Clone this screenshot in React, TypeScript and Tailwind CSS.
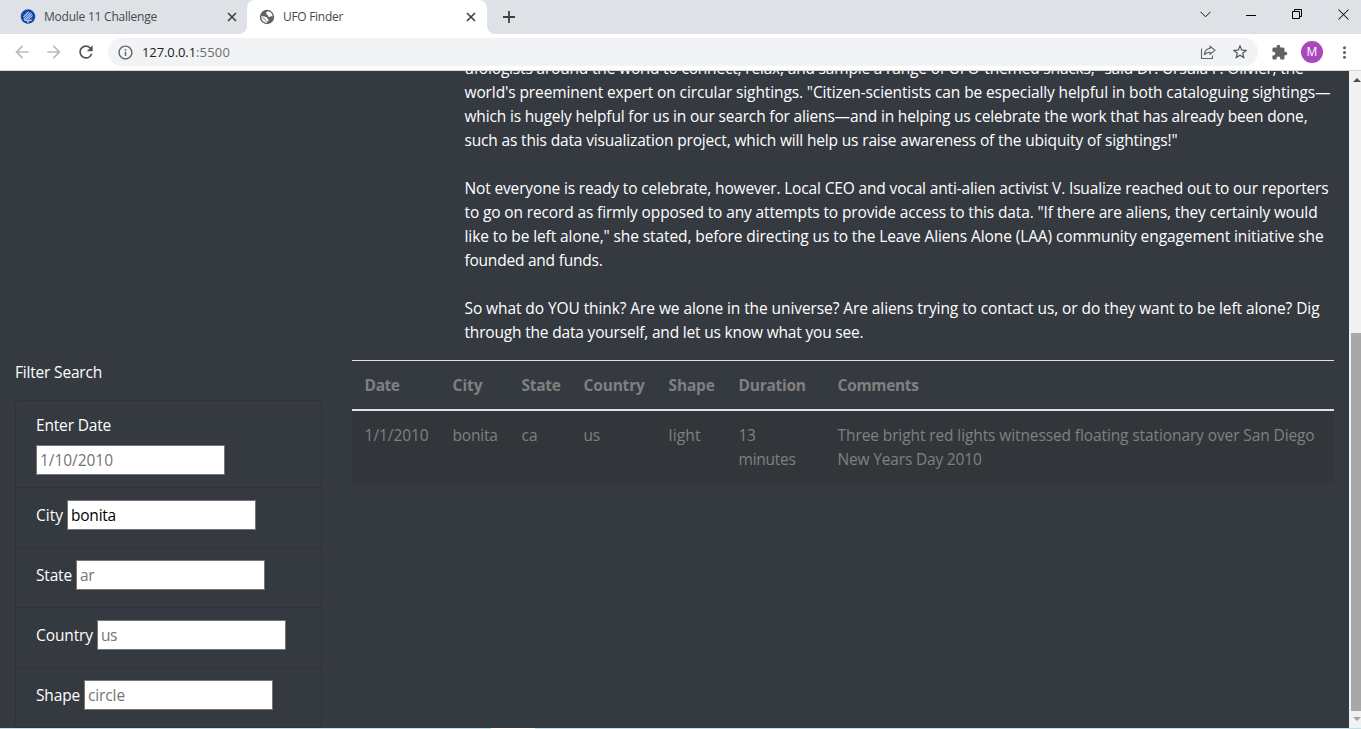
import { useLayoutEffect, useRef, useState } from "react";
import { MdRefresh, MdArrowBack, MdArrowForward, MdStarBorder, MdExtension, MdMoreVert, MdInfoOutline } from "react-icons/md";

/** Inline text tracked so that it fills a given width. */
function Fit({ text, width, className = "" }: { text: string; width: number; className?: string }) {
  const ref = useRef<HTMLSpanElement>(null);
  const [spacing, setSpacing] = useState(0);
  useLayoutEffect(() => {
    const el = ref.current;
    if (!el) return;
    el.style.letterSpacing = "0px";
    const next = (width - el.getBoundingClientRect().width) / text.length;
    el.style.letterSpacing = `${next}px`;
    setSpacing(next);
  }, [text, width]);
  return (
    <span ref={ref} className={`inline-block whitespace-pre ${className}`} style={{ letterSpacing: spacing }}>
      {text}
    </span>
  );
}

type Line = [string, number];

const paragraphs: Line[][] = [
  [
    ["ufologists around the world to connect, relax, and sample a range of UFO-themed snacks,\" said Dr. Ursula F. Olivier, the", 839],
    ["world's preeminent expert on circular sightings. \"Citizen-scientists can be especially helpful in both cataloguing sightings—", 866],
    ["which is hugely helpful for us in our search for aliens—and in helping us celebrate the work that has already been done,", 843],
    ["such as this data visualization project, which will help us raise awareness of the ubiquity of sightings!\"", 713],
  ],
  [
    ["Not everyone is ready to celebrate, however. Local CEO and vocal anti-alien activist V. Isualize reached out to our reporters", 864],
    ["to go on record as firmly opposed to any attempts to provide access to this data. \"If there are aliens, they certainly would", 853],
    ["like to be left alone,\" she stated, before directing us to the Leave Aliens Alone (LAA) community engagement initiative she", 859],
    ["founded and funds.", 138],
  ],
  [
    ["So what do YOU think? Are we alone in the universe? Are aliens trying to contact us, or do they want to be left alone? Dig", 855],
    ["through the data yourself, and let us know what you see.", 399],
  ],
];

const headers: Line[] = [["Date", 35], ["City", 30], ["State", 39], ["Country", 61], ["Shape", 46], ["Duration", 67], ["Comments", 81]];
const cells: Line[][] = [
  [["1/1/2010", 64]],
  [["bonita", 45]],
  [["ca", 16]],
  [["us", 16]],
  [["light", 32]],
  [["13", 17], ["minutes", 57]],
  [["Three bright red lights witnessed floating stationary over San Diego", 477], ["New Years Day 2010", 144]],
];
const grid = "grid grid-cols-[88px_69px_62px_85px_70px_99px_1fr] pl-[12.6px]";

const filters = [
  { label: "City", labelWidth: 27, text: "bonita", textWidth: 45, filled: true },
  { label: "State", labelWidth: 36, text: "ar", textWidth: 14, filled: false },
  { label: "Country", labelWidth: 57, text: "us", textWidth: 16, filled: false },
  { label: "Shape", labelWidth: 44, text: "circle", textWidth: 37, filled: false },
];

function Field({ text, width, filled = false }: { text: string; width: number; filled?: boolean }) {
  return (
    <div className={`flex h-[30px] w-[189px] items-center border border-[#767676] bg-white pl-[3px] leading-6 ${filled ? "text-black" : "text-[#757575]"}`}>
      <Fit text={text} width={width} />
    </div>
  );
}

function Cross() {
  return (
    <svg width="10" height="10" viewBox="0 0 10 10" stroke="#3c4043" strokeWidth="1.6">
      <path d="M1 1l8 8M9 1l-8 8" />
    </svg>
  );
}

function TabStrip() {
  return (
    <div className="flex h-[34px] shrink-0 bg-[#dee1e6] text-[12px] leading-4 text-[#45494d]">
      <div className="flex h-[34px] w-[247px] items-center pl-5">
        <svg width="16" height="16" viewBox="0 0 16 16" className="shrink-0">
          <circle cx="8" cy="7.600" r="7.300" fill="#1546ad" />
          <path d="M3.500 8l5-5M4 10.200l6.500-6.600M5.500 11l6.300-6.300M8 10.800l4.500-4.500" stroke="#b9cdf2" strokeWidth="1.100" />
          <path d="M3.800 10.800q4.200 2.400 8.400 0M8 11.500v3" stroke="#dce6fa" strokeWidth="1" fill="none" />
          <path d="M5 14.200l2 1.800M11 14.200l-2 1.800" stroke="#dee1e6" strokeWidth="1" />
        </svg>
        <Fit text="Module 11 Challenge" width={113} className="ml-2" />
        <div className="ml-[70px] flex"><Cross /></div>
      </div>
      <div className="relative flex h-[34px] w-[240px] items-center rounded-t-lg bg-white pl-3">
        <svg className="absolute bottom-0 -left-2" width="8" height="8"><path d="M8 0v8H0a8 8 0 0 0 8-8z" fill="#fff" /></svg>
        <svg className="absolute -right-2 bottom-0" width="8" height="8"><path d="M0 0v8h8a8 8 0 0 1-8-8z" fill="#fff" /></svg>
        <svg width="16" height="16" viewBox="0 0 16 16" className="shrink-0">
          <circle cx="8" cy="8" r="7.200" fill="#5f6368" />
          <path d="M9.300 2.300C7.800 2.500 7 3.400 7.200 4.600c.2 1 1 .9 1.500 1.500.5.700.2 1.500 1.200 1.800 1.100.3 1.600-.8 3.800-.6C13.500 4.800 11.800 2.900 9.300 2.300z" fill="#fff" />
          <path d="M2.200 7.500c1.700-.3 3.700-.2 5 .5 1.100.600.7 1.600 1.800 2 .9.300.8 1.200.1 1.700-.8.500-1 1-1 2.100C4.900 13.800 2.200 11.200 2.200 7.500z" fill="#fff" />
          <path d="M3 8.800l2.700.9.500 1.300 1 .7-.2 1.300" stroke="#5f6368" strokeWidth=".7" fill="none" />
        </svg>
        <Fit text="UFO Finder" width={60} className="ml-2" />
        <div className="ml-[123px] flex"><Cross /></div>
      </div>
      <div className="flex flex-1 items-center pl-4">
        <svg width="12" height="12" viewBox="0 0 12 12" stroke="#3c4043" strokeWidth="1.8"><path d="M6 0v12M0 6h12" /></svg>
      </div>
      <div className="flex h-7 items-center pr-3">
        <svg width="11" height="7" viewBox="0 0 11 7" fill="none" stroke="#111" strokeWidth="1"><path d="M.5 .8l5 5 5-5" /></svg>
        <svg className="ml-[35px]" width="11" height="11" viewBox="0 0 11 11" stroke="#000" strokeWidth="1"><path d="M0 6.500h10" /></svg>
        <svg className="ml-[35px]" width="11" height="11" viewBox="0 0 11 11" fill="none" stroke="#000" strokeWidth="1"><path d="M.5 2.500h7v7h-7zM2.500 2.500v-2h7v7h-2" /></svg>
        <svg className="ml-[35px]" width="11" height="11" viewBox="0 0 11 11" stroke="#111" strokeWidth="1.050"><path d="M.5 .5l10 10M10.500 .5l-10 10" /></svg>
      </div>
    </div>
  );
}

function Toolbar() {
  return (
    <div className="flex h-[37px] shrink-0 items-center border-b border-[#d5d7da] bg-white pl-3">
      <MdArrowBack size={20} color="#bababa" />
      <MdArrowForward size={20} color="#bababa" className="ml-3" />
      <MdRefresh size={20} color="#505357" className="ml-3" />
      <div className="ml-3 flex h-7 w-[1150px] items-center rounded-full bg-[#f1f3f4] pl-[9px]">
        <MdInfoOutline size={17} color="#5f6368" />
        <div className="ml-2 flex text-[13px] leading-5">
          <Fit text="127.0.0.1" width={54} className="text-[#202124]" />
          <Fit text=":5500" width={34} className="text-[#6a6e73]" />
        </div>
        <div className="flex-1" />
        <svg width="16" height="16" viewBox="0 0 16 16" fill="none" stroke="#5f6368" strokeWidth="1.1">
          <path d="M1.500 4.500v10h11v-3" />
          <path d="M10 2.300l5 4-5 4V8.200C7.300 8.200 5.600 9 4.300 11c.3-4 2.500-6.200 5.700-6.600z" />
        </svg>
        <MdStarBorder size={18} color="#505357" className="mr-[9px] ml-[15px]" />
      </div>
      <MdExtension size={17} color="#5f6368" className="ml-[13px]" />
      <div className="ml-[13px] flex h-[22px] w-[22px] items-center justify-center rounded-full bg-[#ab47bc] text-[12px] text-white">M</div>
      <MdMoreVert size={19} color="#5f6368" className="ml-3" />
    </div>
  );
}

function Article() {
  return (
    <div className="-mt-[15px] ml-[450px] flex flex-col gap-6 leading-6 text-white">
      {paragraphs.map((lines, i) => (
        <div key={i} className="pl-[14.500px]">
          {lines.map(([text, width]) => (
            <div key={text} className="h-6"><Fit text={text} width={width} /></div>
          ))}
        </div>
      ))}
    </div>
  );
}

function Filters() {
  return (
    <div className="w-[307px] leading-6 text-white">
      <div className="h-6"><Fit text="Filter Search" width={87} /></div>
      <div className="mt-4 divide-y divide-[#2e3238] rounded border border-[#2e3238]">
        <div className="h-[87px] pt-3 pl-5">
          <div className="h-6"><Fit text="Enter Date" width={75} /></div>
          <div className="mt-2"><Field text="1/10/2010" width={73} /></div>
        </div>
        {filters.map((f) => (
          <div key={f.label} className="flex h-[60px] items-start gap-1 pt-3 pl-5 last:h-[59px]">
            <div className="pt-[3px]"><Fit text={f.label} width={f.labelWidth} /></div>
            <Field text={f.text} width={f.textWidth} filled={f.filled} />
          </div>
        ))}
      </div>
    </div>
  );
}

function Sightings() {
  return (
    <div className="ml-[30px] w-[982px] border-t border-[#dee2e6] leading-6 text-[#808080]">
      <div className={`${grid} h-[50px] border-b-2 border-[#dee2e6] pt-3 font-bold`}>
        {headers.map(([text, width]) => <div key={text}><Fit text={text} width={width} /></div>)}
      </div>
      <div className={`${grid} bg-[#32363b] py-3`}>
        {cells.map((lines) => (
          <div key={lines[0][0]}>
            {lines.map(([text, width]) => <div key={text} className="h-6"><Fit text={text} width={width} /></div>)}
          </div>
        ))}
      </div>
    </div>
  );
}

function Scrollbar() {
  return (
    <div className="flex w-3 shrink-0 flex-col bg-[#f1f1f1]">
      <svg width="12" height="262" viewBox="0 0 12 262"><path d="M4 11l4-4 4 4z" fill="#505050" /></svg>
      <div className="ml-0.5 h-[378px] bg-[#a8a8a8]" />
      <svg width="12" height="17" viewBox="0 0 12 17"><path d="M4 6h8l-4 4z" fill="#a3a3a3" /></svg>
    </div>
  );
}

export default function App() {
  return (
    <div className="flex h-[729px] w-[1361px] flex-col overflow-hidden bg-white font-['Open_Sans','Noto_Sans',sans-serif]">
      <TabStrip />
      <Toolbar />
      <div className="flex h-[657px] shrink-0">
        <main className="h-[657px] flex-1 overflow-hidden bg-[#353a41] text-[15.5px]">
          <Article />
          <div className="mt-4 flex items-start pl-[15px]">
            <Filters />
            <Sightings />
          </div>
        </main>
        <Scrollbar />
      </div>
      <div className="flex h-px bg-[#c5dfe6]">
        <div className="ml-[491px] h-px w-11 bg-white" />
      </div>
    </div>
  );
}
